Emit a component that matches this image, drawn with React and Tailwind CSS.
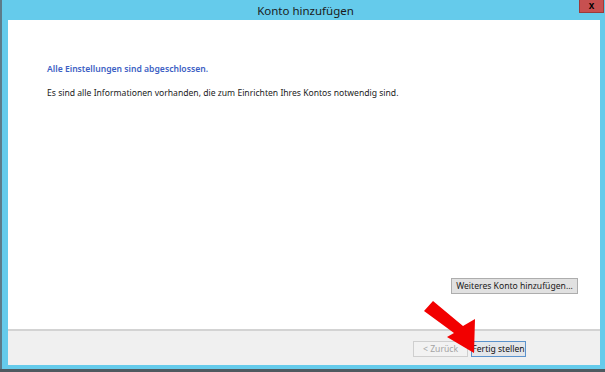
import React from "react";

export default function App() {
  const font = { fontFamily: '"Noto Sans", "Liberation Sans", Arial, sans-serif' };
  return (
    <div className="w-[605px] h-[372px] flex flex-col bg-[#65cbeb] overflow-hidden relative" style={font}>
      <div className="flex flex-1 min-h-0">
        <div className="w-[2px] bg-[#5d7b89]" />
        <div className="flex-1 flex flex-col min-w-0">
          {/* title bar */}
          <div className="h-[20px] relative flex items-center justify-center">
            <span className="text-[11.5px] text-[#1b1b1b] leading-none pt-[1px] pl-[4px]">Konto hinzufügen</span>
            <div className="absolute right-[1px] top-0 w-[25px] h-[13px] bg-[#c75050] border border-[#9c3a3a] border-t-0 flex items-center justify-center">
              <span className="text-[10px] font-bold text-black leading-none" style={{ fontFamily: '"Liberation Sans", Arial, sans-serif' }}>x</span>
            </div>
          </div>
          {/* window body */}
          <div className="flex-1 flex flex-col pl-[6px] pr-[5px] pb-[4px] min-h-0">
            <div className="flex-1 bg-white flex flex-col min-h-0">
              <div className="pl-[39px] pt-[44px] flex flex-col">
                <div className="text-[8.6px] font-semibold text-[#3d5fc4] leading-[11px]">Alle Einstellungen sind abgeschlossen.</div>
                <div className="text-[8.6px] text-[#222] leading-[11px] mt-[13px]">Es sind alle Informationen vorhanden, die zum Einrichten Ihres Kontos notwendig sind.</div>
              </div>
              <div className="flex-1" />
              <div className="flex justify-end pr-[22px] pb-[35px]">
                <div className="w-[127px] h-[16px] bg-[#e1e1e1] border border-[#adadad] flex items-center justify-center text-[8.6px] text-[#1a1a1a] leading-none whitespace-nowrap">
                  Weiteres Konto hinzufügen...
                </div>
              </div>
            </div>
            <div className="h-[2px] bg-[#d3d3d3]" />
            <div className="h-[34px] bg-[#f0f0f0] flex items-start justify-end pt-[10px] pr-[74px] gap-[3px]">
              <div className="w-[55px] h-[16px] bg-[#f2f2f2] border border-[#cfcfcf] flex items-center justify-center text-[8.6px] text-[#a3a3a3] leading-none whitespace-nowrap">
                &lt; Zurück
              </div>
              <div className="w-[55px] h-[16px] bg-[#e3e6ea] border border-[#5b93cc] flex items-center justify-center text-[8.6px] text-[#111] leading-none whitespace-nowrap">
                Fertig stellen
              </div>
            </div>
          </div>
        </div>
      </div>
      <div className="h-[3px] bg-[#4f5a60]" />
      {/* red arrow */}
      <svg className="absolute left-0 top-0 pointer-events-none" width="605" height="372" viewBox="0 0 605 372">
        <polygon
          points="433,301 463,326 475,319 474,353 447,337 454,333 424,311"
          fill="#f20000"
        />
      </svg>
    </div>
  );
}
